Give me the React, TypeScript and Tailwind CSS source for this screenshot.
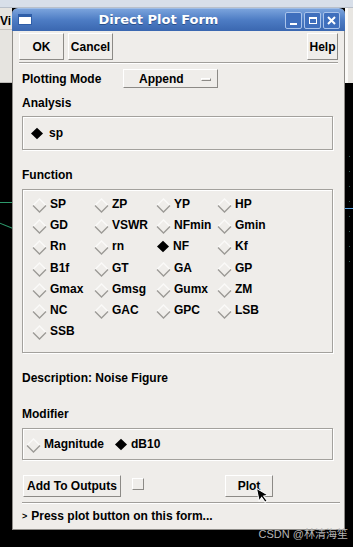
import React from "react";

const FONT = "font-['Liberation_Sans',Arial,sans-serif]";

const functions = [
  ["SP", "ZP", "YP", "HP"],
  ["GD", "VSWR", "NFmin", "Gmin"],
  ["Rn", "rn", "NF", "Kf"],
  ["B1f", "GT", "GA", "GP"],
  ["Gmax", "Gmsg", "Gumx", "ZM"],
  ["NC", "GAC", "GPC", "LSB"],
  ["SSB"],
];

const SELECTED = "NF";

function Diamond({ on }: { on?: boolean }) {
  if (on) {
    return (
      <svg width="14" height="13" viewBox="0 0 14 13" className="shrink-0">
        <path d="M1 6.5 L7 0.8 L13 6.5 L7 12.2 Z" fill="#000" />
      </svg>
    );
  }
  return (
    <svg width="15" height="15" viewBox="0 0 15 15" className="shrink-0 mt-[3px]">
      <path d="M1 7.5 L7.5 1 L14 7.5" stroke="#fbfaf8" strokeWidth="1.3" fill="none" />
      <path d="M1 7.5 L7.5 14 L14 7.5" stroke="#9b9995" strokeWidth="1.3" fill="none" />
    </svg>
  );
}

const raised =
  "border border-t-white border-l-white border-b-[#8c8a86] border-r-[#8c8a86] bg-[#efedea]";

function Frame({ className, children }: { className: string; children: React.ReactNode }) {
  return (
    <div
      className={`ml-[9px] mr-[11px] border border-[#a3a19d] shadow-[inset_1px_1px_0_#ffffff,1px_1px_0_#ffffff] ${className}`}
    >
      {children}
    </div>
  );
}

function Separator({ className }: { className: string }) {
  return <div className={`h-[2px] border-t border-t-[#a09e9a] border-b border-b-white ${className}`} />;
}

export default function App() {
  return (
    <div className={`relative w-[353px] h-[547px] overflow-hidden bg-black ${FONT}`}>
      {/* desktop behind */}
      <div className="absolute inset-x-0 top-0 h-[8px] bg-[#d8dfe9] border-b border-b-[#b9c0ca]" />
      <div className="absolute left-0 top-[8px] w-[12px] h-[75px] bg-[#e6e4e0] border-b border-b-[#bdbbb7]">
        <div className="h-[22px] pt-[7px] text-[12px] leading-none font-bold text-black border-b border-b-[#c6c4c0]">
          Vi
        </div>
      </div>
      <div className="absolute right-0 top-[8px] w-[8px] h-[75px] bg-[#e8e6e2] border-l-[3px] border-l-[#fbfaf8]" />
      <div className="absolute left-0 top-[202px] w-[12px] h-px bg-[#2d9a6c]" />
      <div className="absolute left-[-2px] top-[225px] w-[15px] h-px bg-[#2d9a6c] rotate-[22deg]" />
      <div className="absolute right-0 top-[208px] w-[8px] h-px bg-[#5aa4e6]" />
      <div className="absolute right-[3px] top-[156px] flex flex-col gap-[14px]">
        {Array.from({ length: 8 }).map((_, i) => (
          <div key={i} className="w-px h-px bg-[#2f5a55]" />
        ))}
      </div>

      {/* window */}
      <div className="absolute left-[12px] top-[8px] w-[333px] flex flex-col">
        {/* title bar */}
        <div className="h-[23px] rounded-t-[6px] bg-linear-to-b from-[#7aa3dc] via-[#4d7cc4] to-[#3a67b0] flex items-center pl-[6px] pr-[5px] border-t border-t-[#9fbde6]">
          <div className="w-[14px] h-[11px] bg-white border-t-[3px] border-t-[#2f5ea8] border-x border-b border-[#2f5ea8] -mt-[1px]" />
          <div className="flex-1 text-center text-white font-bold text-[13px] font-['DejaVu_Sans',sans-serif] [text-shadow:0_1px_0_#2a4f8a]">
            Direct Plot Form
          </div>
          <div className="flex gap-[2px]">
            <div className="w-[17px] h-[17px] rounded-[2px] border border-[#a9c3ea] bg-[#3f6fbd] flex items-end justify-center pb-[3px]">
              <div className="w-[7px] h-[2px] bg-white" />
            </div>
            <div className="w-[17px] h-[17px] rounded-[2px] border border-[#a9c3ea] bg-[#3f6fbd] flex items-center justify-center">
              <div className="w-[8px] h-[7px] border border-white border-t-2" />
            </div>
            <div className="w-[17px] h-[17px] rounded-[2px] border border-[#a9c3ea] bg-[#3f6fbd] flex items-center justify-center">
              <svg width="9" height="9" viewBox="0 0 9 9">
                <path d="M1 1 L8 8 M8 1 L1 8" stroke="#fff" strokeWidth="2" />
              </svg>
            </div>
          </div>
        </div>

        {/* body */}
        <div className="h-[499px] bg-[#efedea] border-x border-b border-[#8f8d89] flex flex-col text-[12px] font-bold text-black leading-none">
          {/* buttons */}
          <div className="mt-[2px] h-[27px] flex px-[6px]">
            <button className={`${raised} w-[45px] h-full`}>OK</button>
            <button className={`${raised} ml-[4px] w-[45px] h-full`}>Cancel</button>
            <button className={`${raised} ml-auto w-[31px] h-full`}>Help</button>
          </div>
          <Separator className="mt-[2px] mx-[6px]" />

          {/* plotting mode */}
          <div className="mt-[5px] h-[19px] flex items-center pl-[9px]">
            <span className="w-[101px]">Plotting Mode</span>
            <div className={`${raised} w-[95px] h-full flex items-center pl-[15px] pr-[6px]`}>
              <span>Append</span>
              <div className="ml-auto mt-[2px] w-[10px] h-[3px] border border-t-white border-l-white border-b-[#8c8a86] border-r-[#8c8a86]" />
            </div>
          </div>

          <div className="mt-[7px] h-[16px] flex items-center pl-[9px]">Analysis</div>
          <Frame className="mt-[5px] h-[34px] flex items-center pl-[7px]">
            <Diamond on />
            <span className="ml-[5px]">sp</span>
          </Frame>

          <div className="mt-[17px] h-[16px] flex items-center pl-[9px]">Function</div>
          <Frame className="mt-[6px] h-[164px] pt-[3px] pl-[9px]">
            {functions.map((row, r) => (
              <div key={r} className="h-[21.3px] grid grid-cols-[62px_62px_61px_61px]">
                {row.map((f) => (
                  <div key={f} className="flex items-center">
                    {f === SELECTED ? <Diamond on /> : <Diamond />}
                    <span className="ml-[3px]">{f}</span>
                  </div>
                ))}
              </div>
            ))}
          </Frame>

          <div className="mt-[17px] h-[16px] flex items-center pl-[9px]">Description: Noise Figure</div>

          <div className="mt-[20px] h-[16px] flex items-center pl-[9px]">Modifier</div>
          <Frame className="mt-[6px] h-[32px] flex items-center pl-[3px]">
            <Diamond />
            <span className="ml-[3px]">Magnitude</span>
            <span className="ml-[10px]">
              <Diamond on />
            </span>
            <span className="ml-[3px]">dB10</span>
          </Frame>

          {/* bottom row */}
          <div className="mt-[15px] h-[22px] flex items-center pl-[10px]">
            <button className={`${raised} w-[98px] h-full`}>Add To Outputs</button>
            <div className="ml-[11px] -mt-[4px] w-[12px] h-[12px] border border-t-white border-l-white border-b-[#8c8a86] border-r-[#8c8a86]" />
            <div className="relative ml-[81px] h-full">
              <button className={`${raised} w-[48px] h-full`}>Plot</button>
              <svg
                width="12"
                height="18"
                viewBox="0 0 12 18"
                className="absolute left-[32px] top-[11px] -rotate-[12deg]"
              >
                <path
                  d="M1 1 L1 14 L4.2 11 L6.6 16.5 L8.8 15.6 L6.4 10.2 L10.8 10.2 Z"
                  fill="#000"
                  stroke="#fff"
                  strokeWidth="1"
                />
              </svg>
            </div>
          </div>
          <Separator className="mt-[5px] ml-[9px] mr-[4px]" />
          <div className="mt-[4px] h-[16px] flex items-center pl-[9px]">
            <span className="text-[9px] mr-[4px]">&gt;</span>Press plot button on this form...
          </div>
        </div>
      </div>

      {/* watermark */}
      <div className="absolute right-[5px] top-[529px] text-[11px] leading-none text-[#b4b4b4] font-['Liberation_Sans','Noto_Sans_CJK_SC',sans-serif]">
        CSDN @林清海笙
      </div>
    </div>
  );
}
